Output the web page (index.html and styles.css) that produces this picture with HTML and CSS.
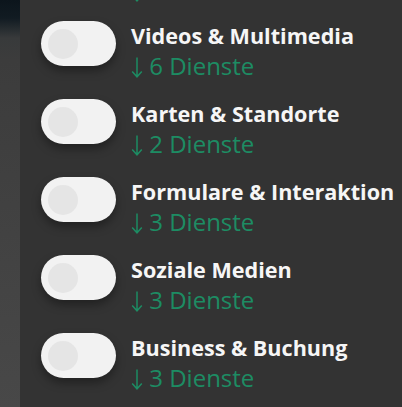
FILE: index.html
```html
<!DOCTYPE html>
<html lang="de">
<head>
<meta charset="utf-8">
<title>Dienste</title>
<link rel="stylesheet" href="styles.css">
</head>
<body>
<div class="layout">
  <div class="side"></div>
  <main class="panel">
    <div class="list">
      <div class="prev-tail">
        <svg class="arrow" viewBox="0 0 12 21" width="12" height="21" aria-hidden="true"><path d="M6 0.5V19.8M1.2 14.6L6 19.8L10.8 14.6" fill="none" stroke="currentColor" stroke-width="1.5"/></svg>
      </div>
      <div class="row">
        <span class="toggle"><span class="knob"></span></span>
        <div class="text">
          <div class="title">Videos &amp; Multimedia</div>
          <div class="count"><svg class="arrow" viewBox="0 0 12 21" width="12" height="21" aria-hidden="true"><path d="M6 0.5V19.8M1.2 14.6L6 19.8L10.8 14.6" fill="none" stroke="currentColor" stroke-width="1.5"/></svg> 6 Dienste</div>
        </div>
      </div>
      <div class="row">
        <span class="toggle"><span class="knob"></span></span>
        <div class="text">
          <div class="title">Karten &amp; Standorte</div>
          <div class="count"><svg class="arrow" viewBox="0 0 12 21" width="12" height="21" aria-hidden="true"><path d="M6 0.5V19.8M1.2 14.6L6 19.8L10.8 14.6" fill="none" stroke="currentColor" stroke-width="1.5"/></svg> 2 Dienste</div>
        </div>
      </div>
      <div class="row">
        <span class="toggle"><span class="knob"></span></span>
        <div class="text">
          <div class="title">Formulare &amp; Interaktion</div>
          <div class="count"><svg class="arrow" viewBox="0 0 12 21" width="12" height="21" aria-hidden="true"><path d="M6 0.5V19.8M1.2 14.6L6 19.8L10.8 14.6" fill="none" stroke="currentColor" stroke-width="1.5"/></svg> 3 Dienste</div>
        </div>
      </div>
      <div class="row">
        <span class="toggle"><span class="knob"></span></span>
        <div class="text">
          <div class="title">Soziale Medien</div>
          <div class="count"><svg class="arrow" viewBox="0 0 12 21" width="12" height="21" aria-hidden="true"><path d="M6 0.5V19.8M1.2 14.6L6 19.8L10.8 14.6" fill="none" stroke="currentColor" stroke-width="1.5"/></svg> 3 Dienste</div>
        </div>
      </div>
      <div class="row">
        <span class="toggle"><span class="knob"></span></span>
        <div class="text">
          <div class="title">Business &amp; Buchung</div>
          <div class="count"><svg class="arrow" viewBox="0 0 12 21" width="12" height="21" aria-hidden="true"><path d="M6 0.5V19.8M1.2 14.6L6 19.8L10.8 14.6" fill="none" stroke="currentColor" stroke-width="1.5"/></svg> 3 Dienste</div>
        </div>
      </div>
    </div>
  </main>
</div>
</body>
</html>
```

FILE: styles.css
```css
* { box-sizing: border-box; }
html, body {
  margin: 0;
  padding: 0;
  width: 402px;
  height: 407px;
  overflow: hidden;
  background: #333333;
}
.layout {
  display: flex;
  height: 407px;
}
.side {
  width: 20px;
  flex: none;
  background: linear-gradient(to bottom, #0c151c 0px, #111b22 18px, #383a3b 38px, #3c3c3c 60px, #484848 407px);
}
.panel {
  flex: 1;
  background: #333333;
  overflow: hidden;
}
.list {
  display: flex;
  flex-direction: column;
  gap: 14px;
  padding-left: 21px;
}
.prev-tail {
  height: 7px;
  overflow: hidden;
  padding-left: 90px;
  color: #1d8c63;
}
.prev-tail .arrow {
  display: block;
  margin-top: -19px;
}
.row {
  display: flex;
  align-items: flex-start;
  gap: 15px;
  height: 64px;
}
.toggle {
  flex: none;
  width: 75px;
  height: 45px;
  border-radius: 23px;
  background: #f2f2f2;
  box-shadow: 0 5px 10px rgba(0, 0, 0, 0.35);
  display: flex;
  align-items: center;
  padding-left: 7px;
}
.knob {
  width: 30px;
  height: 30px;
  border-radius: 50%;
  background: #e5e5e5;
}
.text {
  margin-top: -1px;
  font-family: "Open Sans", "Noto Sans", sans-serif;
}
.title {
  font-size: 21.6px;
  font-weight: 700;
  line-height: 32px;
  color: #f6f6f6;
  white-space: nowrap;
}
.count {
  font-size: 24px;
  font-weight: 400;
  line-height: 30px;
  margin-top: -1px;
  color: #1d8c63;
  white-space: nowrap;
}
.count .arrow {
  vertical-align: -3px;
}
```
